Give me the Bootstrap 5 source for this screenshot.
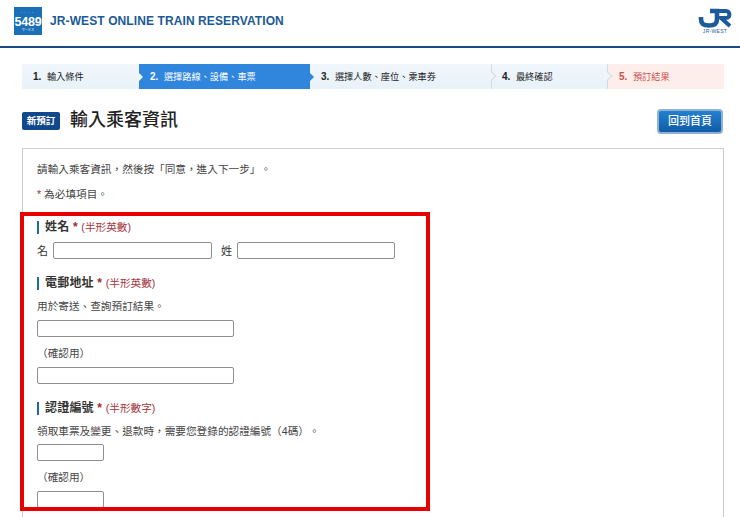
<!DOCTYPE html>
<html lang="zh-Hant">
<head>
<meta charset="utf-8">
<title>輸入乘客資訊</title>
<link href="https://cdn.jsdelivr.net/npm/bootstrap@5.3.0/dist/css/bootstrap.min.css" rel="stylesheet">
<style>
html,body{height:517px;overflow:hidden}
body{font-family:"Liberation Sans","Noto Sans CJK TC",sans-serif;font-size:11px;line-height:16px;color:#333;background:#fff;position:relative;text-spacing-trim:space-all}
.top-bar{height:48px;border-bottom:2px solid #1d4a84;padding:7px 8px 0 14px}
.logo-box{width:28px;height:28px;background:#1b6fb8;color:#fff;flex-direction:column}
.logo-dots{font-size:5px;line-height:5px;letter-spacing:2px;margin-top:3px;height:6px;color:#cfe3f5}
.logo-num{font-size:12.5px;font-weight:700;line-height:12px;letter-spacing:-.2px}
.logo-sub{font-size:3px;line-height:4px}
.site-title{margin-left:8px;font-size:12px;font-weight:700;color:#1b5a96;line-height:28px;letter-spacing:.1px}
.jr-mark{width:34px}
.jr-word{font-size:5px;line-height:6px;color:#1d5a9a;text-align:center;white-space:nowrap;letter-spacing:.3px}
.step-row{margin:16px 16px 0 22px;height:25px}
.step-item{position:relative;padding-left:11px;line-height:25px;font-size:9.2px;background:linear-gradient(#f0f6fb,#e9f2f9);color:#222;white-space:nowrap}
.step-a{width:117px}.step-b{width:171px;background:#2f86dc;color:#fff}.step-c{width:181px}.step-d{width:116px;padding-left:10px}.step-e{width:117px;background:#fdeeec;color:#c9504a}
.step-num{font-family:"Liberation Sans",sans-serif;font-weight:700;font-size:10px;margin-right:3px}
.step-d,.step-e{border-left:1px solid #d3dbe2}
.step-a::after,.step-b::after{content:"";position:absolute;left:100%;top:9px;border-left:4px solid #f0f6fb;border-top:4px solid transparent;border-bottom:4px solid transparent;z-index:1}
.step-b::after{border-left-color:#2f86dc}
.step-d::before,.step-e::before{content:"";position:absolute;left:-3px;top:9px;width:6px;height:6px;background:#eef5fb;border-top:1px solid #d3dbe2;border-right:1px solid #d3dbe2;transform:rotate(45deg)}
.head-row{margin:19px 17px 0 22px;height:26px}
.head-tag{width:38px;height:18px;background:#12498c;color:#fff;font-size:9.5px;font-weight:700;line-height:18px;text-align:center;border-radius:2px}
.head-text{font-size:18px;font-weight:500;color:#222;margin:0 0 2px 10px;line-height:24px}
.home-btn{width:66px;height:25px;padding:0;font-size:11px;font-weight:500;color:#fff;line-height:20px;border:2px solid #8fb2d2;border-radius:4px;background:linear-gradient(#2480d0,#115ca6)}
.form-box{margin:14px 16px 0 22px;height:369px;border:1px solid #ccc;border-bottom:0;padding:12px 14px;overflow:hidden}
.note{margin:0;font-size:10.65px;line-height:16px;color:#444}
.note-req{margin-top:9px}
.star{color:#a5282e}
.sec-title{border-left:2px solid #1b6aa5;padding-left:6px;margin:0;font-size:12px;font-weight:700;line-height:13px;color:#333;letter-spacing:.2px}
.sec-hint{font-size:10.65px;font-weight:400;color:#a5343c;letter-spacing:0}
.sec-first{margin-top:19px}.sec-next{margin-top:18px}
.note-sub{margin-top:8px}.note-confirm{margin-top:8px}
.gap-6px{margin-top:6px}.gap-5px{margin-top:5px}
.field{height:17px;border:1px solid #8f8f8f;border-radius:2px;background:#fff;padding:0;display:block}
.f-name-a{width:159px}.f-name-b{width:158px}.f-mail{width:197px}.f-code{width:67px}
.name-row{margin-top:8px;height:17px}
.lbl-a{width:16px}.lbl-b{padding-left:9px;width:16px;box-sizing:content-box}
.red-frame{position:absolute;left:20px;top:212px;width:410px;height:299px;border:4px solid #e60000;pointer-events:none}
</style>
</head>
<body>
<header class="top-bar d-flex align-items-start">
  <div class="logo-box d-flex align-items-center">
    <div class="logo-dots">····</div>
    <div class="logo-num">5489</div>
    <div class="logo-sub">サービス</div>
  </div>
  <div class="site-title flex-grow-1">JR-WEST ONLINE TRAIN RESERVATION</div>
  <div class="jr-mark">
    <svg width="34" height="21" viewBox="0 0 34 21" class="d-block">
      <path d="M3 10 V12 C3 18 7 18.5 11 18.5 C16.5 18.5 19 17 19 12 V4 H12" fill="none" stroke="#1d5a9a" stroke-width="4.6"/>
      <path d="M19 4 H28 C32.5 4 32.5 11 28 11 H23 L32 19" fill="none" stroke="#1d5a9a" stroke-width="4"/>
    </svg>
    <div class="jr-word">JR-WEST</div>
  </div>
</header>

<nav class="step-row d-flex">
  <div class="step-item step-a"><span class="step-num">1.</span> 輸入條件</div>
  <div class="step-item step-b"><span class="step-num">2.</span> 選擇路線、設備、車票</div>
  <div class="step-item step-c"><span class="step-num">3.</span> 選擇人數、座位、乘車券</div>
  <div class="step-item step-d"><span class="step-num">4.</span> 最終確認</div>
  <div class="step-item step-e"><span class="step-num">5.</span> 預訂結果</div>
</nav>

<div class="head-row d-flex align-items-center">
  <span class="head-tag">新預訂</span>
  <h1 class="head-text flex-grow-1">輸入乘客資訊</h1>
  <button type="button" class="btn home-btn">回到首頁</button>
</div>

<main class="form-box">
  <p class="note">請輸入乘客資訊，然後按「同意，進入下一步」。</p>
  <p class="note note-req"><span class="star">*</span> 為必填項目。</p>

  <h2 class="sec-title sec-first">姓名 <span class="star">*</span> <span class="sec-hint">(半形英數)</span></h2>
  <div class="name-row d-flex align-items-center">
    <span class="lbl-a">名</span><input class="field f-name-a" type="text" aria-label="名">
    <span class="lbl-b">姓</span><input class="field f-name-b" type="text" aria-label="姓">
  </div>

  <h2 class="sec-title sec-next">電郵地址 <span class="star">*</span> <span class="sec-hint">(半形英數)</span></h2>
  <p class="note note-sub">用於寄送、查詢預訂結果。</p>
  <input class="field f-mail gap-6px" type="text" aria-label="電郵地址">
  <p class="note note-confirm">（確認用）</p>
  <input class="field f-mail gap-6px" type="text" aria-label="電郵地址確認">

  <h2 class="sec-title sec-next">認證編號 <span class="star">*</span> <span class="sec-hint">(半形數字)</span></h2>
  <p class="note note-sub">領取車票及變更、退款時，需要您登錄的認證編號（4碼）。</p>
  <input class="field f-code gap-5px" type="text" aria-label="認證編號">
  <p class="note note-confirm">（確認用）</p>
  <input class="field f-code gap-6px" type="text" aria-label="認證編號確認">
</main>

<div class="red-frame"></div>
<script src="https://cdn.jsdelivr.net/npm/bootstrap@5.3.0/dist/js/bootstrap.bundle.min.js"></script>
</body>
</html>
